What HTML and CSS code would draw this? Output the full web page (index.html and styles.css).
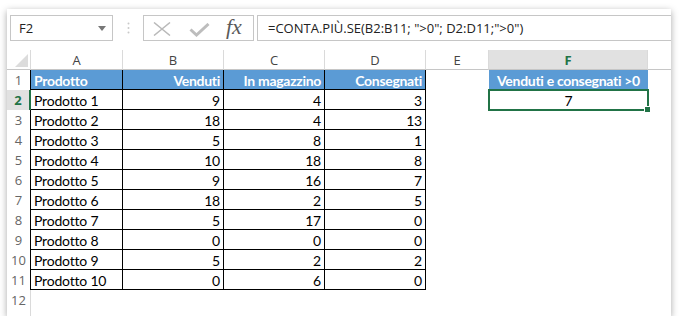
FILE: index.html
```html
<!DOCTYPE html>
<html lang="it">
	<head>
		<meta charset="UTF-8" />
		<meta name="viewport" content="width=device-width, initial-scale=1.0" />
		<title>CONTA.PIÙ.SE</title>
		<link rel="stylesheet" href="styles.css">
	</head>
	<body>
		<div class="window">
			<div class="formula-bar">
				<div class="name-box">
					<span class="name">F2</span>
					<svg class="drop" width="8" height="5" viewBox="0 0 8 5"><path d="M0 0h8L4 5z" fill="#777" /></svg>
				</div>
				<div class="grip">
					<svg width="3" height="12" viewBox="0 0 3 12">
						<circle cx="1.5" cy="1.5" r="1" fill="#c9c9c9" />
						<circle cx="1.5" cy="6" r="1" fill="#c9c9c9" />
						<circle cx="1.5" cy="10.5" r="1" fill="#c9c9c9" />
					</svg>
				</div>
				<div class="fx-buttons">
					<svg class="icon-x" width="18" height="14" viewBox="0 0 18 14"><path d="M1 0.5L17 13.5M17 0.5L1 13.5" stroke="#b9b9b9" stroke-width="1.5" fill="none" /></svg>
					<svg class="icon-check" width="21" height="14" viewBox="0 0 21 14"><path d="M1.5 6.5L7.5 12L19.5 1" stroke="#bdbdbd" stroke-width="3" fill="none" /></svg>
					<span class="fx">fx</span>
				</div>
				<div class="formula">=CONTA.PIÙ.SE(B2:B11; "&gt;0"; D2:D11;"&gt;0")</div>
			</div>

			<div class="sheet">
				<!-- column headers -->
				<div class="corner"><svg width="13" height="13" viewBox="0 0 13 13"><path d="M13 0V13H0z" fill="#dcdcdc" /></svg></div>
				<div class="col-head">A</div>
				<div class="col-head">B</div>
				<div class="col-head">C</div>
				<div class="col-head">D</div>
				<div class="col-head">E</div>
				<div class="col-head active">F</div>
				<div class="col-head last"></div>

				<!-- 1 -->
				<div class="row-head boxed">1</div>
				<div class="t hd">Prodotto</div>
				<div class="t hd num">Venduti</div>
				<div class="t hd num">In magazzino</div>
				<div class="t hd num">Consegnati</div>
				<div class="cell"></div>
				<div class="f-head">Venduti e consegnati &gt;0</div>
				<div class="cell"></div>

				<!-- 2 -->
				<div class="row-head boxed active">2</div>
				<div class="t">Prodotto 1</div>
				<div class="t num">9</div>
				<div class="t num">4</div>
				<div class="t num">3</div>
				<div class="cell"></div>
				<div class="cell sel">7</div>
				<div class="cell"></div>

				<!-- 3 -->
				<div class="row-head boxed">3</div>
				<div class="t">Prodotto 2</div>
				<div class="t num">18</div>
				<div class="t num">4</div>
				<div class="t num">13</div>
				<div class="cell"></div>
				<div class="cell"></div>
				<div class="cell"></div>

				<!-- 4 -->
				<div class="row-head boxed">4</div>
				<div class="t">Prodotto 3</div>
				<div class="t num">5</div>
				<div class="t num">8</div>
				<div class="t num">1</div>
				<div class="cell"></div>
				<div class="cell"></div>
				<div class="cell"></div>

				<!-- 5 -->
				<div class="row-head boxed">5</div>
				<div class="t">Prodotto 4</div>
				<div class="t num">10</div>
				<div class="t num">18</div>
				<div class="t num">8</div>
				<div class="cell"></div>
				<div class="cell"></div>
				<div class="cell"></div>

				<!-- 6 -->
				<div class="row-head boxed">6</div>
				<div class="t">Prodotto 5</div>
				<div class="t num">9</div>
				<div class="t num">16</div>
				<div class="t num">7</div>
				<div class="cell"></div>
				<div class="cell"></div>
				<div class="cell"></div>

				<!-- 7 -->
				<div class="row-head boxed">7</div>
				<div class="t">Prodotto 6</div>
				<div class="t num">18</div>
				<div class="t num">2</div>
				<div class="t num">5</div>
				<div class="cell"></div>
				<div class="cell"></div>
				<div class="cell"></div>

				<!-- 8 -->
				<div class="row-head boxed">8</div>
				<div class="t">Prodotto 7</div>
				<div class="t num">5</div>
				<div class="t num">17</div>
				<div class="t num">0</div>
				<div class="cell"></div>
				<div class="cell"></div>
				<div class="cell"></div>

				<!-- 9 -->
				<div class="row-head boxed">9</div>
				<div class="t">Prodotto 8</div>
				<div class="t num">0</div>
				<div class="t num">0</div>
				<div class="t num">0</div>
				<div class="cell"></div>
				<div class="cell"></div>
				<div class="cell"></div>

				<!-- 10 -->
				<div class="row-head boxed">10</div>
				<div class="t">Prodotto 9</div>
				<div class="t num">5</div>
				<div class="t num">2</div>
				<div class="t num">2</div>
				<div class="cell"></div>
				<div class="cell"></div>
				<div class="cell"></div>

				<!-- 11 -->
				<div class="row-head boxed">11</div>
				<div class="t">Prodotto 10</div>
				<div class="t num">0</div>
				<div class="t num">6</div>
				<div class="t num">0</div>
				<div class="cell"></div>
				<div class="cell"></div>
				<div class="cell"></div>

				<!-- 12 -->
				<div class="row-head">12</div>
				<div class="cell"></div>
				<div class="cell"></div>
				<div class="cell"></div>
				<div class="cell"></div>
				<div class="cell"></div>
				<div class="cell"></div>
				<div class="cell"></div>

				<!-- 13 -->
				<div class="row-head">13</div>
				<div class="cell"></div>
				<div class="cell"></div>
				<div class="cell"></div>
				<div class="cell"></div>
				<div class="cell"></div>
				<div class="cell"></div>
				<div class="cell"></div>
			</div>
		</div>
	</body>
</html>
```

FILE: styles.css
```css
* {
	box-sizing: border-box;
}
body {
	margin: 0;
	background: #fff;
	font-family: "Open Sans", "Noto Sans", sans-serif;
}
.window {
	margin: 9px 0 0 7px;
	width: 664px;
	height: 307px;
	overflow: hidden;
	background: #fff;
	box-shadow: 0 2px 7px rgba(0, 0, 0, 0.35);
}

/* formula bar */
.formula-bar {
	display: flex;
	height: 26px;
	margin: 6px 0 9px 3px;
}
.name-box {
	width: 103px;
	border: 1px solid #c6c6c6;
	display: flex;
	align-items: center;
	justify-content: space-between;
	padding: 0 6px 0 8px;
}
.name {
	font-size: 13px;
	color: #222;
}
.drop {
	margin-top: 1px;
}
.grip {
	width: 30px;
	display: flex;
	align-items: center;
	justify-content: center;
	padding-left: 1px;
}
.fx-buttons {
	width: 111px;
	border: 1px solid #c6c6c6;
	display: flex;
	align-items: center;
	padding-left: 9px;
}
.icon-x {
	margin-top: 1px;
}
.icon-check {
	margin: 3px 0 0 18px;
}
.fx {
	margin-left: 16px;
	font-family: "Liberation Serif", serif;
	font-style: italic;
	font-size: 22px;
	color: #5a5a5a;
	line-height: 1;
	margin-top: -2px;
}
.formula {
	flex: 1;
	margin-left: 3px;
	border: 1px solid #c6c6c6;
	border-right: none;
	padding-left: 10px;
	font-size: 13px;
	line-height: 24px;
	color: #222;
	white-space: nowrap;
}

/* sheet grid */
.sheet {
	display: grid;
	grid-template-columns: 24px 92px 101px 101px 101px 63px 159px 1fr;
	grid-auto-rows: 20px;
	font-family: Lato, "Liberation Sans", sans-serif;
	font-size: 14px;
	letter-spacing: -0.2px;
	color: #000;
}
.sheet > div {
	line-height: 19px;
	padding: 1px 3px 0;
	white-space: nowrap;
	overflow: hidden;
}
.corner {
	border-right: 1px solid #dadada;
	border-bottom: 1px solid #c6c6c6;
	display: flex;
	align-items: flex-end;
	padding: 0 0 2px 8px !important;
}
.col-head {
	font-family: "Open Sans", "Noto Sans", sans-serif;
	font-size: 13px;
	letter-spacing: 0;
	color: #444;
	text-align: center;
	border-right: 1px solid #dadada;
	border-bottom: 1px solid #c6c6c6;
}
.col-head.active {
	background: #e1e1e1;
	color: #217346;
	font-weight: bold;
}
.col-head.last {
	border-right: none;
}
.row-head {
	font-family: "Open Sans", "Noto Sans", sans-serif;
	font-size: 13px;
	letter-spacing: 0;
	color: #666;
	text-align: center;
	border-right: 1px solid #dadada;
}
.row-head.boxed {
	border-right: 1px solid #000;
}
.row-head.active {
	background: #e1e1e1;
	color: #217346;
	font-weight: bold;
	border-right: 2px solid #217346;
}
.t {
	border-right: 1px solid #000;
	border-bottom: 1px solid #000;
}
.hd {
	background: #5b9bd5;
	color: #fff;
	font-weight: bold;
	letter-spacing: -0.3px;
}
.num {
	text-align: right;
}
.f-head {
	background: #5b9bd5;
	color: #fff;
	font-weight: bold;
	letter-spacing: -0.3px;
	text-align: center;
}
.sel {
	position: relative;
	text-align: center;
	overflow: visible !important;
}
.sel::after {
	content: "";
	position: absolute;
	top: -1px;
	left: -1px;
	right: -1px;
	bottom: -1px;
	border: 2px solid #217346;
}
.sel::before {
	content: "";
	position: absolute;
	right: -3px;
	bottom: -3px;
	width: 5px;
	height: 5px;
	background: #217346;
	border: 1px solid #fff;
	z-index: 1;
}
```
